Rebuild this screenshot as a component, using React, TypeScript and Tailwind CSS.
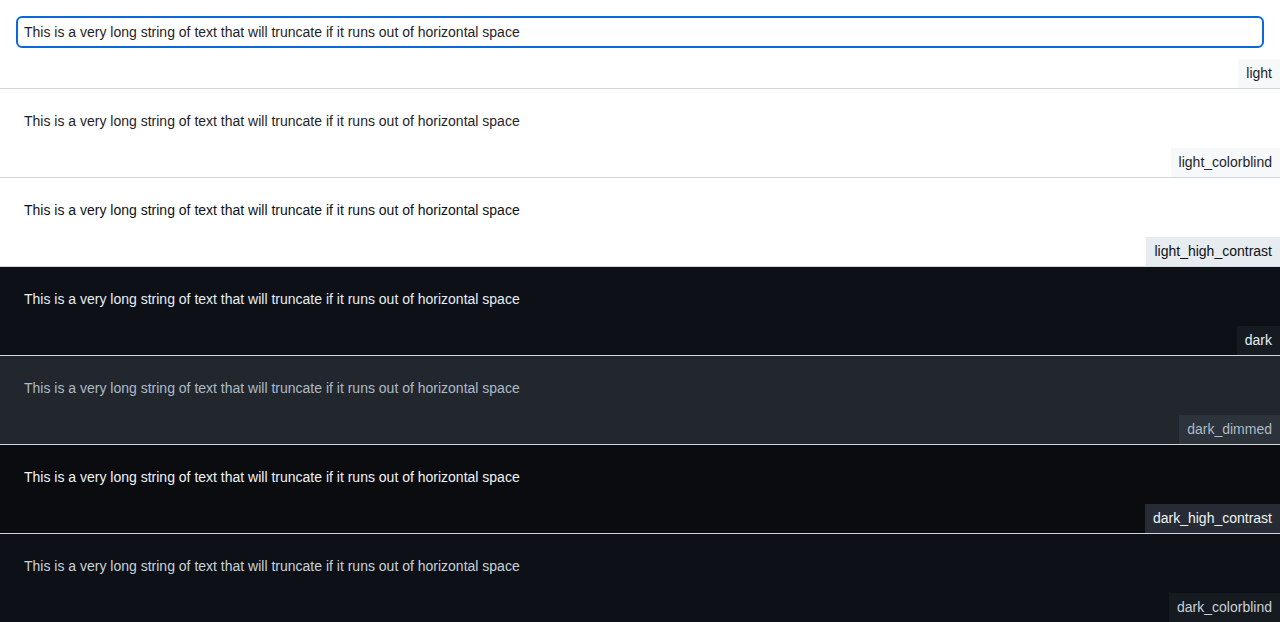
import React from "react";

const themes = [
  { name: "light", bg: "bg-[#ffffff]", text: "text-[#1f2328]", lbg: "bg-[#f6f8fa]", ltext: "text-[#1f2328]", focus: true },
  { name: "light_colorblind", bg: "bg-[#ffffff]", text: "text-[#1f2328]", lbg: "bg-[#f6f8fa]", ltext: "text-[#1f2328]" },
  { name: "light_high_contrast", bg: "bg-[#ffffff]", text: "text-[#0e1116]", lbg: "bg-[#e7ecf0]", ltext: "text-[#0e1116]" },
  { name: "dark", bg: "bg-[#0d1117]", text: "text-[#e6edf3]", lbg: "bg-[#161b22]", ltext: "text-[#e6edf3]" },
  { name: "dark_dimmed", bg: "bg-[#22272e]", text: "text-[#adbac7]", lbg: "bg-[#2d333b]", ltext: "text-[#adbac7]" },
  { name: "dark_high_contrast", bg: "bg-[#0a0c10]", text: "text-[#f0f3f6]", lbg: "bg-[#272b33]", ltext: "text-[#f0f3f6]" },
  { name: "dark_colorblind", bg: "bg-[#0d1117]", text: "text-[#c9d1d9]", lbg: "bg-[#161b22]", ltext: "text-[#c9d1d9]" },
];

const TEXT = "This is a very long string of text that will truncate if it runs out of horizontal space";

export default function App() {
  return (
    <div className="w-[1280px] h-[622px] overflow-hidden" style={{ fontFamily: '"Liberation Sans", Arial, sans-serif' }}>
      {themes.map((t) => (
        <div key={t.name} className={`relative h-[89px] border-b border-[#d0d7de] ${t.bg} ${t.text}`}>
          <div className="p-4">
            <div
              className={`h-8 flex items-center rounded-[6px] px-[6px] border-2 text-sm ${
                t.focus ? "border-[#0969da]" : "border-transparent"
              }`}
            >
              <span className="truncate">{TEXT}</span>
            </div>
          </div>
          <div className={`absolute right-0 bottom-0 h-[29px] px-2 pt-1 text-sm leading-5 ${t.lbg} ${t.ltext}`}>
            {t.name}
          </div>
        </div>
      ))}
    </div>
  );
}
